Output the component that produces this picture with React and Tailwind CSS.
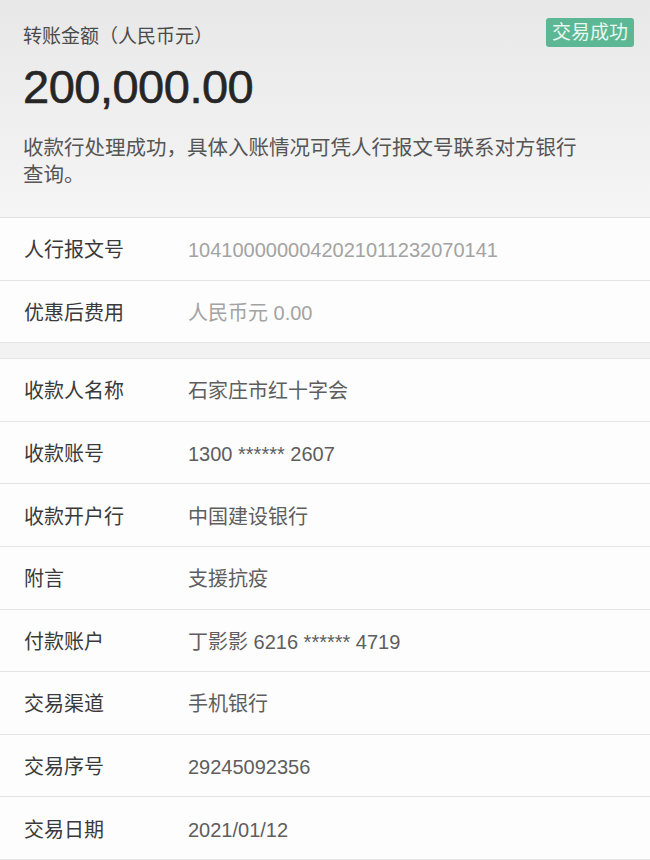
const FONT = "font-['Liberation_Sans','Noto_Sans_CJK_SC',sans-serif]";

const Row = ({ label, value, light }) => (
  <div className="flex items-center h-[62.6px] pt-[3px] border-b border-[#e6e6e6] pl-6">
    <div className="w-[164px] shrink-0 text-[20px] text-[#3a3a3a]">{label}</div>
    <div className={`text-[20px] ${light ? "text-[#a3a3a3]" : "text-[#5e5e5e]"}`}>{value}</div>
  </div>
);

const App = () => {
  return (
    <div className={`w-[650px] h-[860px] overflow-hidden bg-[#f1f1f1] ${FONT}`}>
      <div className="h-[218px] bg-gradient-to-b from-[#e8e8e8] to-[#f5f5f5] border-b border-[#e2e2e2] px-[23px] pt-[18px]">
        <div className="flex items-start justify-between">
          <p className="mt-[4px] text-[19px] leading-[30px] text-[#4a4a4a]">转账金额（人民币元）</p>
          <span className="mr-[-7px] bg-[#5cb894] text-[#eaf7f0] text-[19px] leading-[29px] px-[6px] rounded-[3px]">交易成功</span>
        </div>
        <p className="mt-[13px] text-[47px] leading-[44px] text-[#262626] tracking-[-0.5px] [-webkit-text-stroke:0.6px_#262626]">200,000.00</p>
        <p className="mt-[25px] text-[20.5px] leading-[27px] text-[#555] w-[560px]">
          收款行处理成功，具体入账情况可凭人行报文号联系对方银行查询。
        </p>
      </div>
      <div className="bg-[#fdfdfd]">
        <Row label="人行报文号" value="1041000000042021011232070141" light />
        <Row label="优惠后费用" value="人民币元 0.00" light />
      </div>
      <div className="h-[16px] bg-[#f2f2f2] border-b border-[#e6e6e6]" />
      <div className="bg-[#fdfdfd]">
        <Row label="收款人名称" value="石家庄市红十字会" />
        <Row label="收款账号" value="1300 ****** 2607" />
        <Row label="收款开户行" value="中国建设银行" />
        <Row label="附言" value="支援抗疫" />
        <Row label="付款账户" value="丁影影 6216 ****** 4719" />
        <Row label="交易渠道" value="手机银行" />
        <Row label="交易序号" value="29245092356" />
        <Row label="交易日期" value="2021/01/12" />
      </div>
    </div>
  );
};

export default App;
